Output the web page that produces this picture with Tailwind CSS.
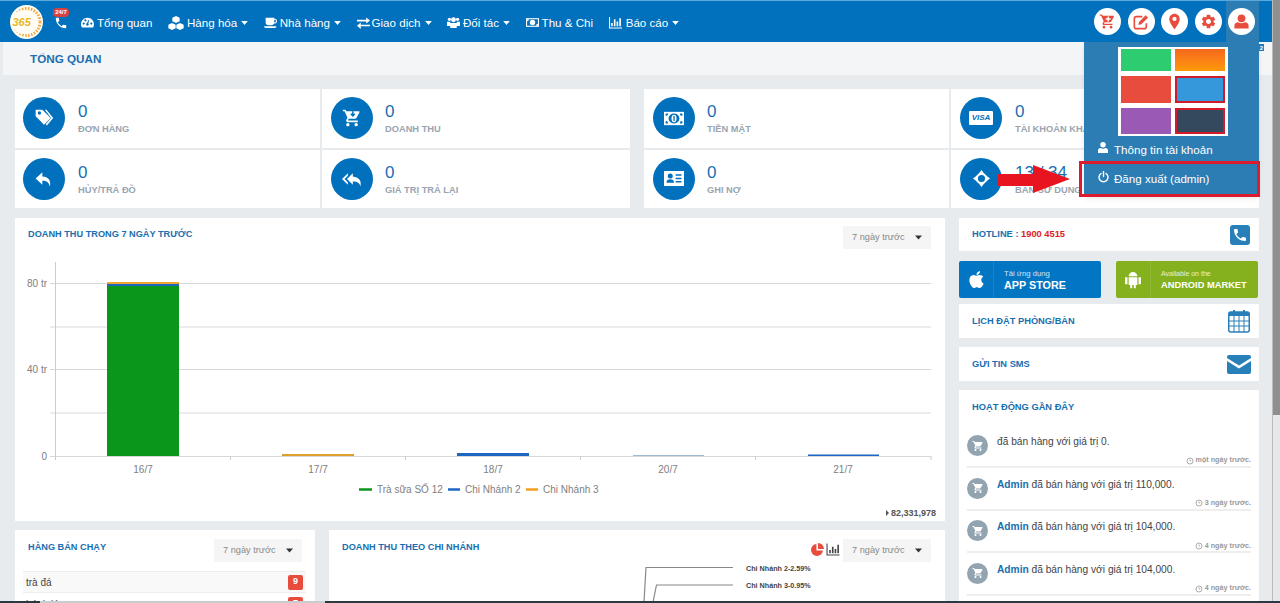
<!DOCTYPE html>
<html lang="vi">
<head>
  <meta charset="UTF-8" />
  <title>Tổng quan</title>
  <script src="https://cdn.jsdelivr.net/npm/@tailwindcss/browser@4"></script>
</head>
<body class="relative flex h-[603px] w-[1280px] overflow-hidden bg-[#e8ebee] font-['Liberation_Sans',Arial,sans-serif]">
  <svg class="hidden">
    <symbol id="cart" viewBox="0 0 24 24"><path d="M7 18c-1.100 0-2 .9-2 2s.9 2 2 2 2-.9 2-2-.9-2-2-2zM1 2v2h2l3.600 7.590-1.350 2.450c-.16.28-.25.61-.25.96 0 1.100.9 2 2 2h12v-2H7.420c-.14 0-.25-.11-.25-.25l.03-.12.9-1.630h7.450c.75 0 1.410-.41 1.750-1.030l3.580-6.490A1 1 0 0 0 20 4H5.210l-.94-2H1zm16 16c-1.100 0-2 .9-2 2s.9 2 2 2 2-.9 2-2-.9-2-2-2z"/></symbol>
    <symbol id="clock" viewBox="0 0 12 12"><circle cx="6" cy="6" r="4.500" fill="none" stroke="currentColor" stroke-width="1.200"/><path d="M6 3.500V6h2" fill="none" stroke="currentColor"/></symbol>
    <symbol id="caret" viewBox="0 0 10 6"><path d="M0 0h10L5 6z"/></symbol>
  </svg>

  <div class="flex w-[1272px] shrink-0 flex-col">
    <!-- Top bar -->
    <header class="flex h-[42px] shrink-0 items-center border-t border-[#5aa9dc] bg-[#0170bd] pr-[13px] text-[11.600px] text-white">
      <svg class="ml-[10px] h-[34px] w-[33px] shrink-0" viewBox="0 0 33 34">
        <ellipse cx="16.500" cy="17" rx="16.500" ry="17" fill="#fffdf4"/>
        <ellipse cx="17" cy="17" rx="13" ry="13.500" fill="none" stroke="#efa643" stroke-width="3" stroke-dasharray="1.500 1.500"/>
        <ellipse cx="13" cy="17" rx="11" ry="12" fill="#fffdf4"/>
        <text x="2.500" y="21" font-size="11" font-weight="700" font-style="italic" fill="#e8b81e">365</text>
      </svg>
      <div class="relative ml-[10px] mt-[3px] w-[28px] shrink-0">
        <svg class="ml-[1px] h-[14px] w-[14px] fill-white" viewBox="0 0 24 24"><path d="M6.600 10.800c1.400 2.800 3.800 5.100 6.600 6.600l2.200-2.200c.3-.3.7-.4 1-.2 1.100.4 2.300.6 3.600.6.6 0 1 .4 1 1V20c0 .6-.4 1-1 1C10.600 21 3 13.400 3 4c0-.6.4-1 1-1h3.500c.6 0 1 .4 1 1 0 1.300.2 2.500.6 3.600.1.3 0 .7-.2 1z"/></svg>
        <span class="absolute left-0 top-[-8px] flex h-[9px] w-[16px] items-center justify-center rounded-[4px] bg-[#d9413f] text-[6px] font-bold">24/7</span>
      </div>
      <nav class="mt-[3px] flex items-center">
        <a class="flex items-center">
          <svg class="mr-[3px] h-[13px] w-[13px] fill-white" viewBox="0 0 24 24"><path d="M12 3C5.400 3 0 8.400 0 15c0 2.200.6 4.300 1.700 6h20.600c1.100-1.700 1.700-3.800 1.700-6 0-6.600-5.400-12-12-12zm-7 13a2 2 0 1 1 0-4 2 2 0 0 1 0 4zm3-6a2 2 0 1 1 0-4 2 2 0 0 1 0 4zm4 8a2.500 2.500 0 0 1-1-4.800L14 7l1 .4-1.500 6.300A2.500 2.500 0 0 1 12 18zm7-2a2 2 0 1 1 0-4 2 2 0 0 1 0 4z"/></svg>
          Tổng quan
        </a>
        <a class="ml-[15.500px] flex items-center">
          <svg class="mr-[3px] h-[14px] w-[16px] fill-white" viewBox="0 0 24 21"><path d="M12 0l5.500 2.500v5.500L12 10.500 6.500 8V2.500zM6 10.500l5.500 2.500v5.500L6 21 .5 18.500V13zM18 10.500l5.500 2.500v5.500L18 21l-5.500-2.500V13z"/></svg>
          Hàng hóa
          <svg class="ml-[4px] h-[4px] w-[7px] fill-white"><use href="#caret"/></svg>
        </a>
        <a class="ml-[15.500px] flex items-center">
          <svg class="mr-[3px] h-[13px] w-[13px] fill-white" viewBox="0 0 24 24"><path d="M3 3h16v2h1c2 0 4 1.500 4 4.500S22 14 20 14h-1.500c-.8 2-2.500 3-4.500 3H8c-3 0-5-2-5-5zm16 4v5h1c1 0 2-.8 2-2.500S21 7 20 7zM0 19h23c0 1.500-1 3-3 3H3c-2 0-3-1.500-3-3z"/></svg>
          Nhà hàng
          <svg class="ml-[4px] h-[4px] w-[7px] fill-white"><use href="#caret"/></svg>
        </a>
        <a class="ml-[15.500px] flex items-center">
          <svg class="mr-[2px] h-[12px] w-[13px] fill-white" viewBox="0 0 24 22"><path d="M0 5h17V1l7 5.500-7 5.500V8H0zM24 14H7v-4l-7 6 7 6v-5h17z"/></svg>
          Giao dịch
          <svg class="ml-[4px] h-[4px] w-[7px] fill-white"><use href="#caret"/></svg>
        </a>
        <a class="ml-[15.500px] flex items-center">
          <svg class="mr-[3px] h-[13px] w-[13px] fill-white" viewBox="0 0 24 24"><circle cx="12" cy="7" r="4.500"/><circle cx="4.500" cy="6" r="3"/><circle cx="19.500" cy="6" r="3"/><path d="M6 13h12v9H6zM0 10.500h6v8H0zM18 10.500h6v8h-6z"/></svg>
          Đối tác
          <svg class="ml-[4px] h-[4px] w-[7px] fill-white"><use href="#caret"/></svg>
        </a>
        <a class="ml-[15.500px] flex items-center">
          <svg class="mr-[3px] h-[11px] w-[13px]" viewBox="0 0 24 20"><path class="fill-white" d="M0 2h24v16H0z"/><path class="fill-[#0170bd]" d="M2 4h20v12H2z"/><circle cx="12" cy="10" r="5" class="fill-white"/><path class="fill-white" d="M2 4h3.500C5.500 6 4 7.500 2 7.500zM22 16h-3.500c0-2 1.500-3.500 3.500-3.500z"/></svg>
          Thu &amp; Chi
        </a>
        <a class="ml-[15.500px] flex items-center">
          <svg class="mr-[4px] h-[13px] w-[13px] fill-white" viewBox="0 0 24 24"><path d="M0 2h2v19h22v2H0zM4 13h3v6H4zM9 6h3v13H9zM14 10h3v9h-3zM19 4h3v15h-3z"/></svg>
          Báo cáo
          <svg class="ml-[4px] h-[4px] w-[7px] fill-white"><use href="#caret"/></svg>
        </a>
      </nav>
      <div class="ml-auto flex h-full items-center">
        <span class="mr-[6.500px] flex h-[27px] w-[27px] items-center justify-center rounded-full bg-white">
          <svg class="h-[17px] w-[17px]" viewBox="0 0 24 24"><use href="#cart" class="fill-[#e74c3c]"/><path d="M9.500 8.500h7M13 5v7" fill="none" stroke="#fff" stroke-width="2"/></svg>
        </span>
        <span class="mr-[6.500px] flex h-[27px] w-[27px] items-center justify-center rounded-full bg-white">
          <svg class="h-[16px] w-[16px]" viewBox="0 0 24 24"><path d="M20 14v5a3 3 0 0 1-3 3H5a3 3 0 0 1-3-3V7a3 3 0 0 1 3-3h9" fill="none" stroke="#e74c3c" stroke-width="2.400"/><path d="M9 12L19 2l3.500 3.500-10 10L8 16.500z" fill="#e74c3c"/></svg>
        </span>
        <span class="mr-[6.500px] flex h-[27px] w-[27px] items-center justify-center rounded-full bg-white">
          <svg class="h-[17px] w-[17px] fill-[#e74c3c]" viewBox="0 0 24 24"><path fill-rule="evenodd" d="M12 1C7.900 1 4.600 4.300 4.600 8.400c0 5.400 7.400 14.600 7.400 14.600s7.400-9.200 7.400-14.600C19.400 4.300 16.100 1 12 1zm0 10.400a3 3 0 1 1 0-6 3 3 0 0 1 0 6z"/></svg>
        </span>
        <span class="mr-[4.500px] flex h-[27px] w-[27px] items-center justify-center rounded-full bg-white">
          <svg class="h-[17px] w-[17px] fill-[#e74c3c]" viewBox="0 0 24 24"><path d="M19.140 12.940c.04-.3.06-.61.06-.94 0-.32-.02-.64-.07-.94l2.030-1.580a.49.49 0 0 0 .12-.61l-1.920-3.320a.488.488 0 0 0-.59-.22l-2.390.96c-.5-.38-1.030-.7-1.620-.94l-.36-2.540a.484.484 0 0 0-.48-.41h-3.840c-.24 0-.43.17-.47.41l-.36 2.540c-.59.24-1.130.57-1.620.94l-2.390-.96c-.22-.08-.47 0-.59.22L2.740 8.870c-.12.21-.08.47.12.61l2.030 1.580c-.05.3-.09.63-.09.94s.02.64.07.94l-2.030 1.580a.49.49 0 0 0-.12.61l1.920 3.320c.12.22.37.29.59.22l2.390-.96c.5.38 1.030.7 1.620.94l.36 2.540c.05.24.24.41.48.41h3.840c.24 0 .44-.17.47-.41l.36-2.540c.59-.24 1.130-.56 1.620-.94l2.390.96c.22.08.47 0 .59-.22l1.920-3.320c.12-.22.07-.47-.12-.61l-2.010-1.580zM12 15.600c-1.980 0-3.600-1.620-3.600-3.600s1.620-3.600 3.600-3.600 3.600 1.620 3.600 3.600-1.620 3.600-3.600 3.600z"/></svg>
        </span>
        <span class="flex h-full w-[33px] items-center bg-[#2d7db5] pl-[2px]">
          <span class="flex h-[27px] w-[27px] items-center justify-center rounded-full bg-white">
            <svg class="h-[17px] w-[17px] fill-[#e74c3c]" viewBox="0 0 24 24"><circle cx="12" cy="7.500" r="5.500"/><path d="M2 22v-4c0-3 2.500-5 5-5 1.500 1 3 1.500 5 1.500s3.500-.5 5-1.500c2.500 0 5 2 5 5v4z"/></svg>
          </span>
        </span>
      </div>
    </header>

    <div class="ml-[3px] flex h-[33px] shrink-0 items-center bg-[#f3f5f6] pl-[27px] text-[11.700px] font-bold text-[#1a6fb0]">TỔNG QUAN</div>

    <div class="pl-[15px] pt-[14px]">
      <!-- Stat tiles -->
      <div class="flex gap-[14px]">
        <div class="grid h-[119px] w-[615px] grid-cols-[305px_308px] grid-rows-2 gap-[2px]">
          <div class="flex items-center bg-white pl-[8px]">
            <span class="flex h-[42px] w-[42px] items-center justify-center rounded-full bg-[#0170bd]">
              <svg class="h-[20px] w-[20px] fill-white" viewBox="0 0 24 24"><path fill-rule="evenodd" d="M2 2h8l10 10-8 8L2 10zm4.500 6a2 2 0 1 0 0-4 2 2 0 0 0 0 4z"/><path d="M13 2h2l8 10-7.500 9-1.500-1.500L20.500 12z"/></svg>
            </span>
            <div class="ml-[13px]">
              <div class="text-[17px] leading-[22px] text-[#1a6fb0]">0</div>
              <div class="text-[9.300px] font-bold leading-[12px] text-[#9aa5b1]">ĐƠN HÀNG</div>
            </div>
          </div>
          <div class="flex items-center bg-white pl-[9px]">
            <span class="flex h-[42px] w-[42px] items-center justify-center rounded-full bg-[#0170bd]">
              <svg class="h-[20px] w-[20px]" viewBox="0 0 24 24"><use href="#cart" class="fill-white"/><path d="M13 4v5M10.500 7l2.500 2.500L15.500 7" fill="none" stroke="#0170bd" stroke-width="1.800"/></svg>
            </span>
            <div class="ml-[12px]">
              <div class="text-[17px] leading-[22px] text-[#1a6fb0]">0</div>
              <div class="text-[9.300px] font-bold leading-[12px] text-[#9aa5b1]">DOANH THU</div>
            </div>
          </div>
          <div class="flex items-center bg-white pl-[8px]">
            <span class="flex h-[42px] w-[42px] items-center justify-center rounded-full bg-[#0170bd]">
              <svg class="h-[20px] w-[20px] fill-white" viewBox="0 0 24 24"><path d="M10 9V4l-8 7.500L10 19v-5c5.500 0 8 2 9 7 2-7-2-12-9-12z"/></svg>
            </span>
            <div class="ml-[13px]">
              <div class="text-[17px] leading-[22px] text-[#1a6fb0]">0</div>
              <div class="text-[9.300px] font-bold leading-[12px] text-[#9aa5b1]">HỦY/TRẢ ĐỒ</div>
            </div>
          </div>
          <div class="flex items-center bg-white pl-[9px]">
            <span class="flex h-[42px] w-[42px] items-center justify-center rounded-full bg-[#0170bd]">
              <svg class="h-[20px] w-[20px] fill-white" viewBox="0 0 24 24"><path d="M7 8V5l-7 7 7 7v-3l-4-4 4-4zm6 1V5l-7 7 7 7v-4.100c5 0 8.500 1.600 9 6.100 2-7-2-11-9-12z"/></svg>
            </span>
            <div class="ml-[12px]">
              <div class="text-[17px] leading-[22px] text-[#1a6fb0]">0</div>
              <div class="text-[9.300px] font-bold leading-[12px] text-[#9aa5b1]">GIÁ TRỊ TRẢ LẠI</div>
            </div>
          </div>
        </div>
        <div class="grid h-[119px] w-[615px] grid-cols-[305px_308px] grid-rows-2 gap-[2px]">
          <div class="flex items-center bg-white pl-[9px]">
            <span class="flex h-[42px] w-[42px] items-center justify-center rounded-full bg-[#0170bd]">
              <svg class="h-[15px] w-[20px]" viewBox="0 0 24 16"><path class="fill-white" d="M0 0h24v16H0z"/><ellipse cx="12" cy="8" rx="6.500" ry="6" fill="#0170bd"/><ellipse cx="12" cy="8" rx="3" ry="4.500" class="fill-white"/><path d="M11.200 5h1.600v6h-1.600z" fill="#0170bd"/><path d="M2 2h3C5 4 4 5 2 5zM22 14h-3c0-2 1-3 3-3zM22 2h-3c0 2 1 3 3 3zM2 14h3c0-2-1-3-3-3z" fill="#0170bd"/></svg>
            </span>
            <div class="ml-[12px]">
              <div class="text-[17px] leading-[22px] text-[#1a6fb0]">0</div>
              <div class="text-[9.300px] font-bold leading-[12px] text-[#9aa5b1]">TIỀN MẶT</div>
            </div>
          </div>
          <div class="flex items-center bg-white pl-[9px]">
            <span class="flex h-[42px] w-[42px] items-center justify-center rounded-full bg-[#0170bd]">
              <span class="flex h-[14px] w-[24px] items-center justify-center rounded-[1px] bg-white text-[8px] font-bold italic text-[#0170bd]">VISA</span>
            </span>
            <div class="ml-[13px]">
              <div class="text-[17px] leading-[22px] text-[#1a6fb0]">0</div>
              <div class="text-[9.300px] font-bold leading-[12px] text-[#9aa5b1]">TÀI KHOẢN KHÁC</div>
            </div>
          </div>
          <div class="flex items-center bg-white pl-[9px]">
            <span class="flex h-[42px] w-[42px] items-center justify-center rounded-full bg-[#0170bd]">
              <svg class="h-[17px] w-[20px]" viewBox="0 0 24 20"><path class="fill-white" d="M0 1h24v18H0z"/><circle cx="7.500" cy="7" r="3" fill="#0170bd"/><path d="M3 15c0-3 2-4 4.500-4s4.500 1 4.500 4zM14 5h7v1.800h-7zM14 9h7v1.800h-7zM14 13h7v1.800h-7z" fill="#0170bd"/></svg>
            </span>
            <div class="ml-[12px]">
              <div class="text-[17px] leading-[22px] text-[#1a6fb0]">0</div>
              <div class="text-[9.300px] font-bold leading-[12px] text-[#9aa5b1]">GHI NỢ</div>
            </div>
          </div>
          <div class="flex items-center bg-white pl-[9px]">
            <span class="flex h-[42px] w-[42px] items-center justify-center rounded-full bg-[#0170bd]">
              <svg class="h-[17px] w-[17px]" viewBox="0 0 24 24"><circle cx="12" cy="12" r="6.500" fill="none" stroke="#fff" stroke-width="3"/><path d="M12 0l4.500 6h-9zM12 24l-4.500-6h9zM0 12l6-4.500v9zM24 12l-6 4.500v-9z" fill="#fff"/></svg>
            </span>
            <div class="ml-[13px]">
              <div class="text-[17px] leading-[22px] text-[#1a6fb0]">13 / 34</div>
              <div class="text-[9.300px] font-bold leading-[12px] text-[#9aa5b1]">BÀN SỬ DỤNG</div>
            </div>
          </div>
        </div>
      </div>

      <div class="mt-[10px] flex gap-[14px]">
        <!-- Left column -->
        <div class="w-[930px] shrink-0">
          <section class="h-[303px] bg-white">
            <div class="flex h-[44px] items-start justify-between pl-[13px] pr-[14px] pt-[8px]">
              <h2 class="mt-[2px] text-[9.200px] font-bold text-[#1a6fb0]">DOANH THU TRONG 7 NGÀY TRƯỚC</h2>
              <div class="flex h-[23px] w-[88px] items-center justify-between bg-[#f5f5f5] pl-[9px] pr-[9px] text-[9.200px] text-[#888]">
                7 ngày trước
                <svg class="h-[5px] w-[7px] fill-[#333]"><use href="#caret"/></svg>
              </div>
            </div>
            <svg class="block" width="930" height="240" viewBox="15 262 930 240">
              <path d="M50 283.500H931M50 369.500H931M50 456.500H931" stroke="#d8d8d8" fill="none"/>
              <path d="M50 327H931M50 413H931" stroke="#e6e6e6" stroke-width="1.500" fill="none"/>
              <path d="M55.500 262V460M230.500 456V460M405.500 456V460M580.500 456V460M755.500 456V460M931 456V460" stroke="#ccc" fill="none"/>
              <rect x="107" y="282" width="72" height="2" fill="#f0a52b"/>
              <rect x="107" y="284" width="72" height="2.500" fill="#1e66c4"/>
              <rect x="107" y="286" width="72" height="170" fill="#0a961a"/>
              <rect x="282" y="454" width="72" height="2" fill="#e0a030"/>
              <rect x="457" y="453" width="72" height="3" fill="#1e66c4"/>
              <rect x="633" y="455" width="71" height="1" fill="#9fb9d0"/>
              <rect x="808" y="454.500" width="71" height="1.500" fill="#1e66c4"/>
              <g font-size="10" fill="#808080">
                <text x="47" y="287" text-anchor="end">80 tr</text>
                <text x="47" y="373" text-anchor="end">40 tr</text>
                <text x="47" y="460" text-anchor="end">0</text>
                <text x="143" y="473" text-anchor="middle">16/7</text>
                <text x="318" y="473" text-anchor="middle">17/7</text>
                <text x="493" y="473" text-anchor="middle">18/7</text>
                <text x="668" y="473" text-anchor="middle">20/7</text>
                <text x="843" y="473" text-anchor="middle">21/7</text>
                <text x="377" y="493">Trà sữa SỐ 12</text>
                <text x="465" y="493">Chi Nhánh 2</text>
                <text x="543" y="493">Chi Nhánh 3</text>
              </g>
              <path d="M359 489.500h13" stroke="#0a961a" stroke-width="2.500"/>
              <path d="M448 489.500h12" stroke="#1e66c4" stroke-width="2.500"/>
              <path d="M526 489.500h12" stroke="#f59d1c" stroke-width="2.500"/>
            </svg>
            <div class="mt-[5px] flex items-center justify-end pr-[9px] text-[9px] font-bold leading-[12px] text-[#555]">
              <svg class="mr-[2px] h-[6px] w-[3px] fill-[#555]" viewBox="0 0 3 6"><path d="M0 0l3 3-3 3z"/></svg>
              82,331,978
            </div>
          </section>

          <div class="mt-[9px] flex h-[100px] gap-[14px]">
            <section class="w-[300px] shrink-0 bg-white pt-[9px]">
              <div class="flex items-start justify-between pl-[13px] pr-[13px]">
                <h2 class="mt-[2px] text-[9.200px] font-bold text-[#1a6fb0]">HÀNG BÁN CHẠY</h2>
                <div class="flex h-[23px] w-[88px] items-center justify-between bg-[#f5f5f5] pl-[9px] pr-[9px] text-[9.200px] text-[#888]">
                  7 ngày trước
                  <svg class="h-[5px] w-[7px] fill-[#333]"><use href="#caret"/></svg>
                </div>
              </div>
              <ul class="ml-[8px] mr-[9px] mt-[9px] text-[10px] text-[#444]">
                <li class="flex h-[22px] items-center justify-between border-y border-[#eee] bg-[#f9f9f9] pl-[3px] pr-[3px]">
                  trà đá
                  <span class="flex h-[15px] w-[15px] items-center justify-center rounded-[2px] bg-[#e74c3c] text-[9px] font-bold text-white">9</span>
                </li>
                <li class="flex h-[22px] items-center justify-between pl-[3px] pr-[3px]">
                  bánh lá
                  <span class="flex h-[15px] w-[15px] items-center justify-center rounded-[2px] bg-[#e74c3c] text-[9px] font-bold text-white">7</span>
                </li>
              </ul>
            </section>
            <section class="w-[616px] shrink-0 bg-white pt-[9px]">
              <div class="flex items-start pl-[13px] pr-[14px]">
                <h2 class="mt-[2px] text-[9.200px] font-bold text-[#1a6fb0]">DOANH THU THEO CHI NHÁNH</h2>
                <svg class="ml-auto mt-[4px] h-[13px] w-[13px] fill-[#e74c3c]" viewBox="0 0 24 24"><path d="M10 2v12h12a11 11 0 1 1-12-12zM13 0a11 11 0 0 1 11 11H13z"/></svg>
                <svg class="ml-[2px] mr-[3px] mt-[4px] h-[13px] w-[14px] fill-[#444]" viewBox="0 0 24 24"><path d="M0 1h2v20h22v2H0zM5 13h3v6H5zM10 7h3v12h-3zM15 11h3v8h-3zM20 3h3v16h-3z"/></svg>
                <div class="flex h-[23px] w-[88px] items-center justify-between bg-[#f5f5f5] pl-[9px] pr-[9px] text-[9.200px] text-[#888]">
                  7 ngày trước
                  <svg class="h-[5px] w-[7px] fill-[#333]"><use href="#caret"/></svg>
                </div>
              </div>
              <svg class="block" width="616" height="40" viewBox="329 562 616 40">
                <path d="M733 567.500H646L644 602M733 585H656.500L653 602" fill="none" stroke="#888" stroke-width="1.200"/>
                <g font-size="7.200" font-weight="700" fill="#444">
                  <text x="746" y="570.500">Chi Nhánh 2-2.59%</text>
                  <text x="746" y="588">Chi Nhánh 3-0.95%</text>
                </g>
              </svg>
            </section>
          </div>
        </div>

        <!-- Right column -->
        <aside class="w-[300px] shrink-0">
          <div class="flex h-[33px] items-center justify-between bg-white pl-[13px] pr-[9px]">
            <span class="text-[9.300px] font-bold text-[#1a6fb0]">HOTLINE : <span class="text-[#e01b24]">1900 4515</span></span>
            <span class="flex h-[20px] w-[20px] items-center justify-center rounded-[3px] bg-[#2980b9]">
              <svg class="h-[16px] w-[16px] fill-white" viewBox="0 0 24 24"><path d="M6.600 10.800c1.400 2.800 3.800 5.100 6.600 6.600l2.200-2.200c.3-.3.7-.4 1-.2 1.100.4 2.300.6 3.600.6.6 0 1 .4 1 1V20c0 .6-.4 1-1 1C10.600 21 3 13.400 3 4c0-.6.4-1 1-1h3.500c.6 0 1 .4 1 1 0 1.300.2 2.500.6 3.600.1.300 0 .7-.2 1z"/></svg>
            </span>
          </div>
          <div class="mt-[10px] flex h-[37px] gap-[15px]">
            <a class="flex w-[142px] items-center rounded-[2px] bg-[#0275c3] text-white">
              <span class="flex h-full w-[35px] items-center justify-center border-r border-white/10">
                <svg class="h-[19px] w-[17px] fill-white" viewBox="3 2 18 20"><path d="M17.050 20.280c-.98.95-2.050.8-3.080.35-1.090-.46-2.090-.48-3.240 0-1.440.62-2.200.44-3.060-.35C2.790 15.250 3.510 7.590 9.050 7.310c1.350.07 2.290.74 3.080.8 1.180-.24 2.310-.93 3.570-.84 1.510.12 2.650.72 3.400 1.800-3.120 1.870-2.380 5.980.48 7.130-.57 1.500-1.310 2.990-2.540 4.090zM12.030 7.250c-.15-2.230 1.660-4.070 3.740-4.250.29 2.580-2.340 4.500-3.740 4.250z"/></svg>
              </span>
              <span class="pl-[10px]">
                <span class="block text-[7.700px] leading-[10px] text-white/80">Tải ứng dụng</span>
                <span class="block text-[10.800px] font-bold leading-[12px]">APP STORE</span>
              </span>
            </a>
            <a class="flex w-[142px] items-center rounded-[2px] bg-[#85b11e] text-white">
              <span class="flex h-full w-[35px] items-center justify-center border-r border-white/10">
                <svg class="h-[19px] w-[16px] fill-white" viewBox="0 0 20 24"><path d="M4.500 8a5.500 5.500 0 0 1 11 0zM4.500 9h11v10h-2v4h-2.500v-4H9v4H6.500v-4h-2zM0 9h3v9H0zM17 9h3v9h-3z"/></svg>
              </span>
              <span class="pl-[10px]">
                <span class="block text-[7px] leading-[10px] text-white/80">Available on the</span>
                <span class="block text-[9.300px] font-bold leading-[12px]">ANDROID MARKET</span>
              </span>
            </a>
          </div>
          <div class="mt-[6px] flex h-[34px] items-center justify-between bg-white pl-[13px] pr-[9px]">
            <span class="mt-[1px] text-[9.300px] font-bold text-[#1a6fb0]">LỊCH ĐẶT PHÒNG/BÀN</span>
            <svg class="h-[24px] w-[22px]" viewBox="0 0 22 24"><rect x=".75" y="3" width="20.500" height="20" rx="2" fill="#fff" stroke="#2980b9" stroke-width="1.500"/><path d="M1 3h20v4H1z" fill="#2980b9"/><path d="M1 12h20M1 17h20M6 7v16M11 7v16M16 7v16" stroke="#2980b9"/><path d="M6 1v5M16 1v5" stroke="#2980b9" stroke-width="2"/></svg>
          </div>
          <div class="mt-[9px] flex h-[34px] items-center justify-between bg-white pl-[13px] pr-[8px]">
            <span class="mt-[1px] text-[9.300px] font-bold text-[#1a6fb0]">GỬI TIN SMS</span>
            <svg class="h-[19px] w-[24px]" viewBox="0 0 24 19"><path d="M2 0h20a2 2 0 0 1 2 2v1L12 10.500 0 3V2a2 2 0 0 1 2-2zM0 6l12 7.500L24 6v11a2 2 0 0 1-2 2H2a2 2 0 0 1-2-2z" fill="#2980b9"/></svg>
          </div>
          <section class="mt-[9px] h-[220px] bg-white px-[8px]">
            <h2 class="pl-[5px] pt-[11px] text-[9.300px] font-bold leading-[12px] text-[#1a6fb0]">HOẠT ĐỘNG GẦN ĐÂY</h2>
            <ul class="mt-[22px] space-y-[9.670px] text-[10.200px] text-[#444]">
              <li class="relative h-[33px] border-b-2 border-[#eee]">
                <div class="flex">
                  <span class="flex h-[21px] w-[21px] shrink-0 items-center justify-center rounded-full bg-[#93a4b1]"><svg class="h-[12px] w-[12px] fill-white"><use href="#cart"/></svg></span>
                  <p class="ml-[9px] mt-[-1px]">đã bán hàng với giá trị 0.</p>
                </div>
                <div class="absolute bottom-0 right-0 flex items-center text-[7.200px] font-bold text-[#999]"><svg class="mr-[2px] h-[8px] w-[8px]"><use href="#clock"/></svg>một ngày trước.</div>
              </li>
              <li class="relative h-[33px] border-b-2 border-[#eee]">
                <div class="flex">
                  <span class="flex h-[21px] w-[21px] shrink-0 items-center justify-center rounded-full bg-[#93a4b1]"><svg class="h-[12px] w-[12px] fill-white"><use href="#cart"/></svg></span>
                  <p class="ml-[9px] mt-[-1px]"><b class="text-[#1a6fb0]">Admin</b> đã bán hàng với giá trị 110,000.</p>
                </div>
                <div class="absolute bottom-0 right-0 flex items-center text-[7.200px] font-bold text-[#999]"><svg class="mr-[2px] h-[8px] w-[8px]"><use href="#clock"/></svg>3 ngày trước.</div>
              </li>
              <li class="relative h-[33px] border-b-2 border-[#eee]">
                <div class="flex">
                  <span class="flex h-[21px] w-[21px] shrink-0 items-center justify-center rounded-full bg-[#93a4b1]"><svg class="h-[12px] w-[12px] fill-white"><use href="#cart"/></svg></span>
                  <p class="ml-[9px] mt-[-1px]"><b class="text-[#1a6fb0]">Admin</b> đã bán hàng với giá trị 104,000.</p>
                </div>
                <div class="absolute bottom-0 right-0 flex items-center text-[7.200px] font-bold text-[#999]"><svg class="mr-[2px] h-[8px] w-[8px]"><use href="#clock"/></svg>4 ngày trước.</div>
              </li>
              <li class="relative h-[33px] border-b-2 border-[#eee]">
                <div class="flex">
                  <span class="flex h-[21px] w-[21px] shrink-0 items-center justify-center rounded-full bg-[#93a4b1]"><svg class="h-[12px] w-[12px] fill-white"><use href="#cart"/></svg></span>
                  <p class="ml-[9px] mt-[-1px]"><b class="text-[#1a6fb0]">Admin</b> đã bán hàng với giá trị 104,000.</p>
                </div>
                <div class="absolute bottom-0 right-0 flex items-center text-[7.200px] font-bold text-[#999]"><svg class="mr-[2px] h-[8px] w-[8px]"><use href="#clock"/></svg>4 ngày trước.</div>
              </li>
            </ul>
          </section>
        </aside>
      </div>
    </div>
  </div>

  <!-- Scrollbar -->
  <div class="h-full w-[8px] shrink-0 border-l border-[#bbb] bg-[#e6e8ea]">
    <div class="h-[415px] bg-[#8f8f8f]"></div>
  </div>

  <!-- Account dropdown -->
  <div class="absolute left-[1084px] top-[42px] h-[153px] w-[175px] bg-[#2d7db5] shadow-md">
    <div class="ml-[34px] mt-[5px] grid h-[89px] w-[110px] grid-cols-2 gap-x-[4px] gap-y-[5px] bg-white px-[3px] py-[2px]">
      <div class="bg-[#2ecc71]"></div>
      <div class="bg-gradient-to-b from-[#f5661c] to-[#fe9a05]"></div>
      <div class="bg-[#e74c3c]"></div>
      <div class="border-2 border-[#d11a2a] bg-[#3498db]"></div>
      <div class="bg-[#9b59b6]"></div>
      <div class="border-2 border-[#d11a2a] bg-[#34495e]"></div>
    </div>
    <a class="mt-[4px] flex h-[20px] items-center pl-[14px] text-[11.600px] text-white">
      <svg class="mr-[6px] mt-[-5px] h-[11px] w-[10px] fill-white" viewBox="0 0 20 22"><circle cx="10" cy="5.500" r="5.500"/><path d="M0 22v-5c0-3 2-5 5-5 1.500 1 3 1.500 5 1.500s3.500-.5 5-1.500c3 0 5 2 5 5v5z"/></svg>
      Thông tin tài khoản
    </a>
    <a class="mt-[9px] flex h-[20px] items-center pl-[14px] text-[11.600px] text-white">
      <svg class="mr-[5px] mt-[-5px] h-[12px] w-[11px]" viewBox="0 0 22 24"><path d="M6 5a9 9 0 1 0 10 0M11 1v10" fill="none" stroke="#fff" stroke-width="2.800" stroke-linecap="round"/></svg>
      Đăng xuất (admin)
    </a>
  </div>
  <div class="absolute left-[1079px] top-[161px] h-[36px] w-[181px] border-[3px] border-[#dc1c2e]"></div>
  <svg class="absolute left-[998px] top-[165px] h-[28px] w-[72px]" viewBox="0 0 72 28"><path d="M0 9h35V0l37 14-37 14v-7H0z" fill="#e8141f"/></svg>
  <span class="absolute left-[1259px] top-[44px] flex h-[7px] w-[5px] items-center justify-center bg-[#1f78bd] text-[6px] font-bold leading-none text-white">2</span>

  <!-- Window edge -->
  <div class="absolute bottom-0 left-0 flex h-[2px] w-full bg-[#2b3a42]">
    <div class="ml-[40px] w-[285px] bg-[#c9cdd0]"></div>
  </div>
</body>
</html>
